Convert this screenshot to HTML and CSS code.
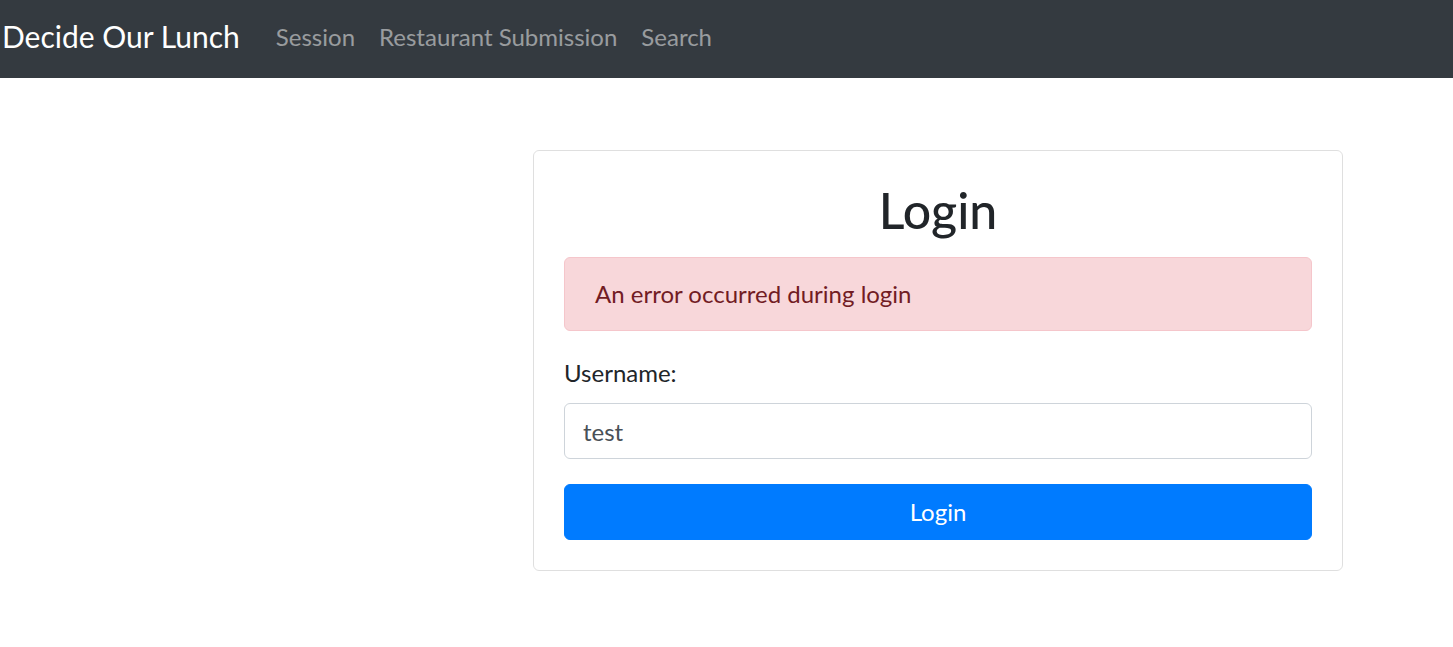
FILE: index.html
```html
<!DOCTYPE html>
<html lang="en">
<head>
<meta charset="utf-8">
<title>Decide Our Lunch</title>
<link rel="stylesheet" href="styles.css">
</head>
<body>
<nav class="navbar">
  <a class="brand" href="#">Decide Our Lunch</a>
  <ul class="nav">
    <li><a class="nav-link" href="#">Session</a></li>
    <li><a class="nav-link" href="#">Restaurant Submission</a></li>
    <li><a class="nav-link" href="#">Search</a></li>
  </ul>
</nav>
<main class="page">
  <div class="card">
    <h2 class="title">Login</h2>
    <div class="alert">An error occurred during login</div>
    <form class="form">
      <div class="form-group">
        <label class="label" for="username">Username:</label>
        <input class="input" id="username" type="text" value="test">
      </div>
      <button class="btn" type="button">Login</button>
    </form>
  </div>
</main>
</body>
</html>
```
FILE: styles.css
```css
* { box-sizing: border-box; }
html, body { margin: 0; padding: 0; }
body {
  font-family: Lato, "Noto Sans", sans-serif;
  font-size: 24px;
  line-height: 1.5;
  color: #212529;
  background: #fff;
}
.navbar {
  display: flex;
  align-items: center;
  height: 78px;
  background: #343a40;
  padding: 0 2px 5px;
}
.brand {
  font-size: 30px;
  line-height: 45px;
  color: #fff;
  text-decoration: none;
  margin-right: 24px;
}
.nav {
  display: flex;
  list-style: none;
  margin: 0;
  padding: 0;
}
.nav-link {
  display: block;
  padding: 0 12px;
  color: rgba(255,255,255,.5);
  text-decoration: none;
  line-height: 36px;
}
.page {
  display: grid;
  grid-template-columns: 533px 810px;
  padding-top: 72px;
}
.card {
  grid-column: 2;
  border: 1px solid rgba(0,0,0,.125);
  border-radius: 6px;
  padding: 30px;
}
.title {
  margin: 0 0 18px;
  font-size: 50px;
  font-weight: 500;
  line-height: 58px;
  text-align: center;
}
.alert {
  background: #f8d7da;
  border: 1px solid #f5c6cb;
  color: #721c24;
  border-radius: 6px;
  padding: 18px 30px;
  margin-bottom: 24px;
}
.form-group { margin-bottom: 25px; }
.label {
  display: block;
  margin-bottom: 12px;
}
.input {
  display: block;
  width: 100%;
  height: 56px;
  padding: 9px 18px;
  font: inherit;
  color: #495057;
  border: 1px solid #ced4da;
  border-radius: 6px;
  background: #fff;
}
.btn {
  display: block;
  width: 100%;
  height: 56px;
  font: inherit;
  color: #fff;
  background: #007bff;
  border: 1px solid #007bff;
  border-radius: 6px;
}
```
